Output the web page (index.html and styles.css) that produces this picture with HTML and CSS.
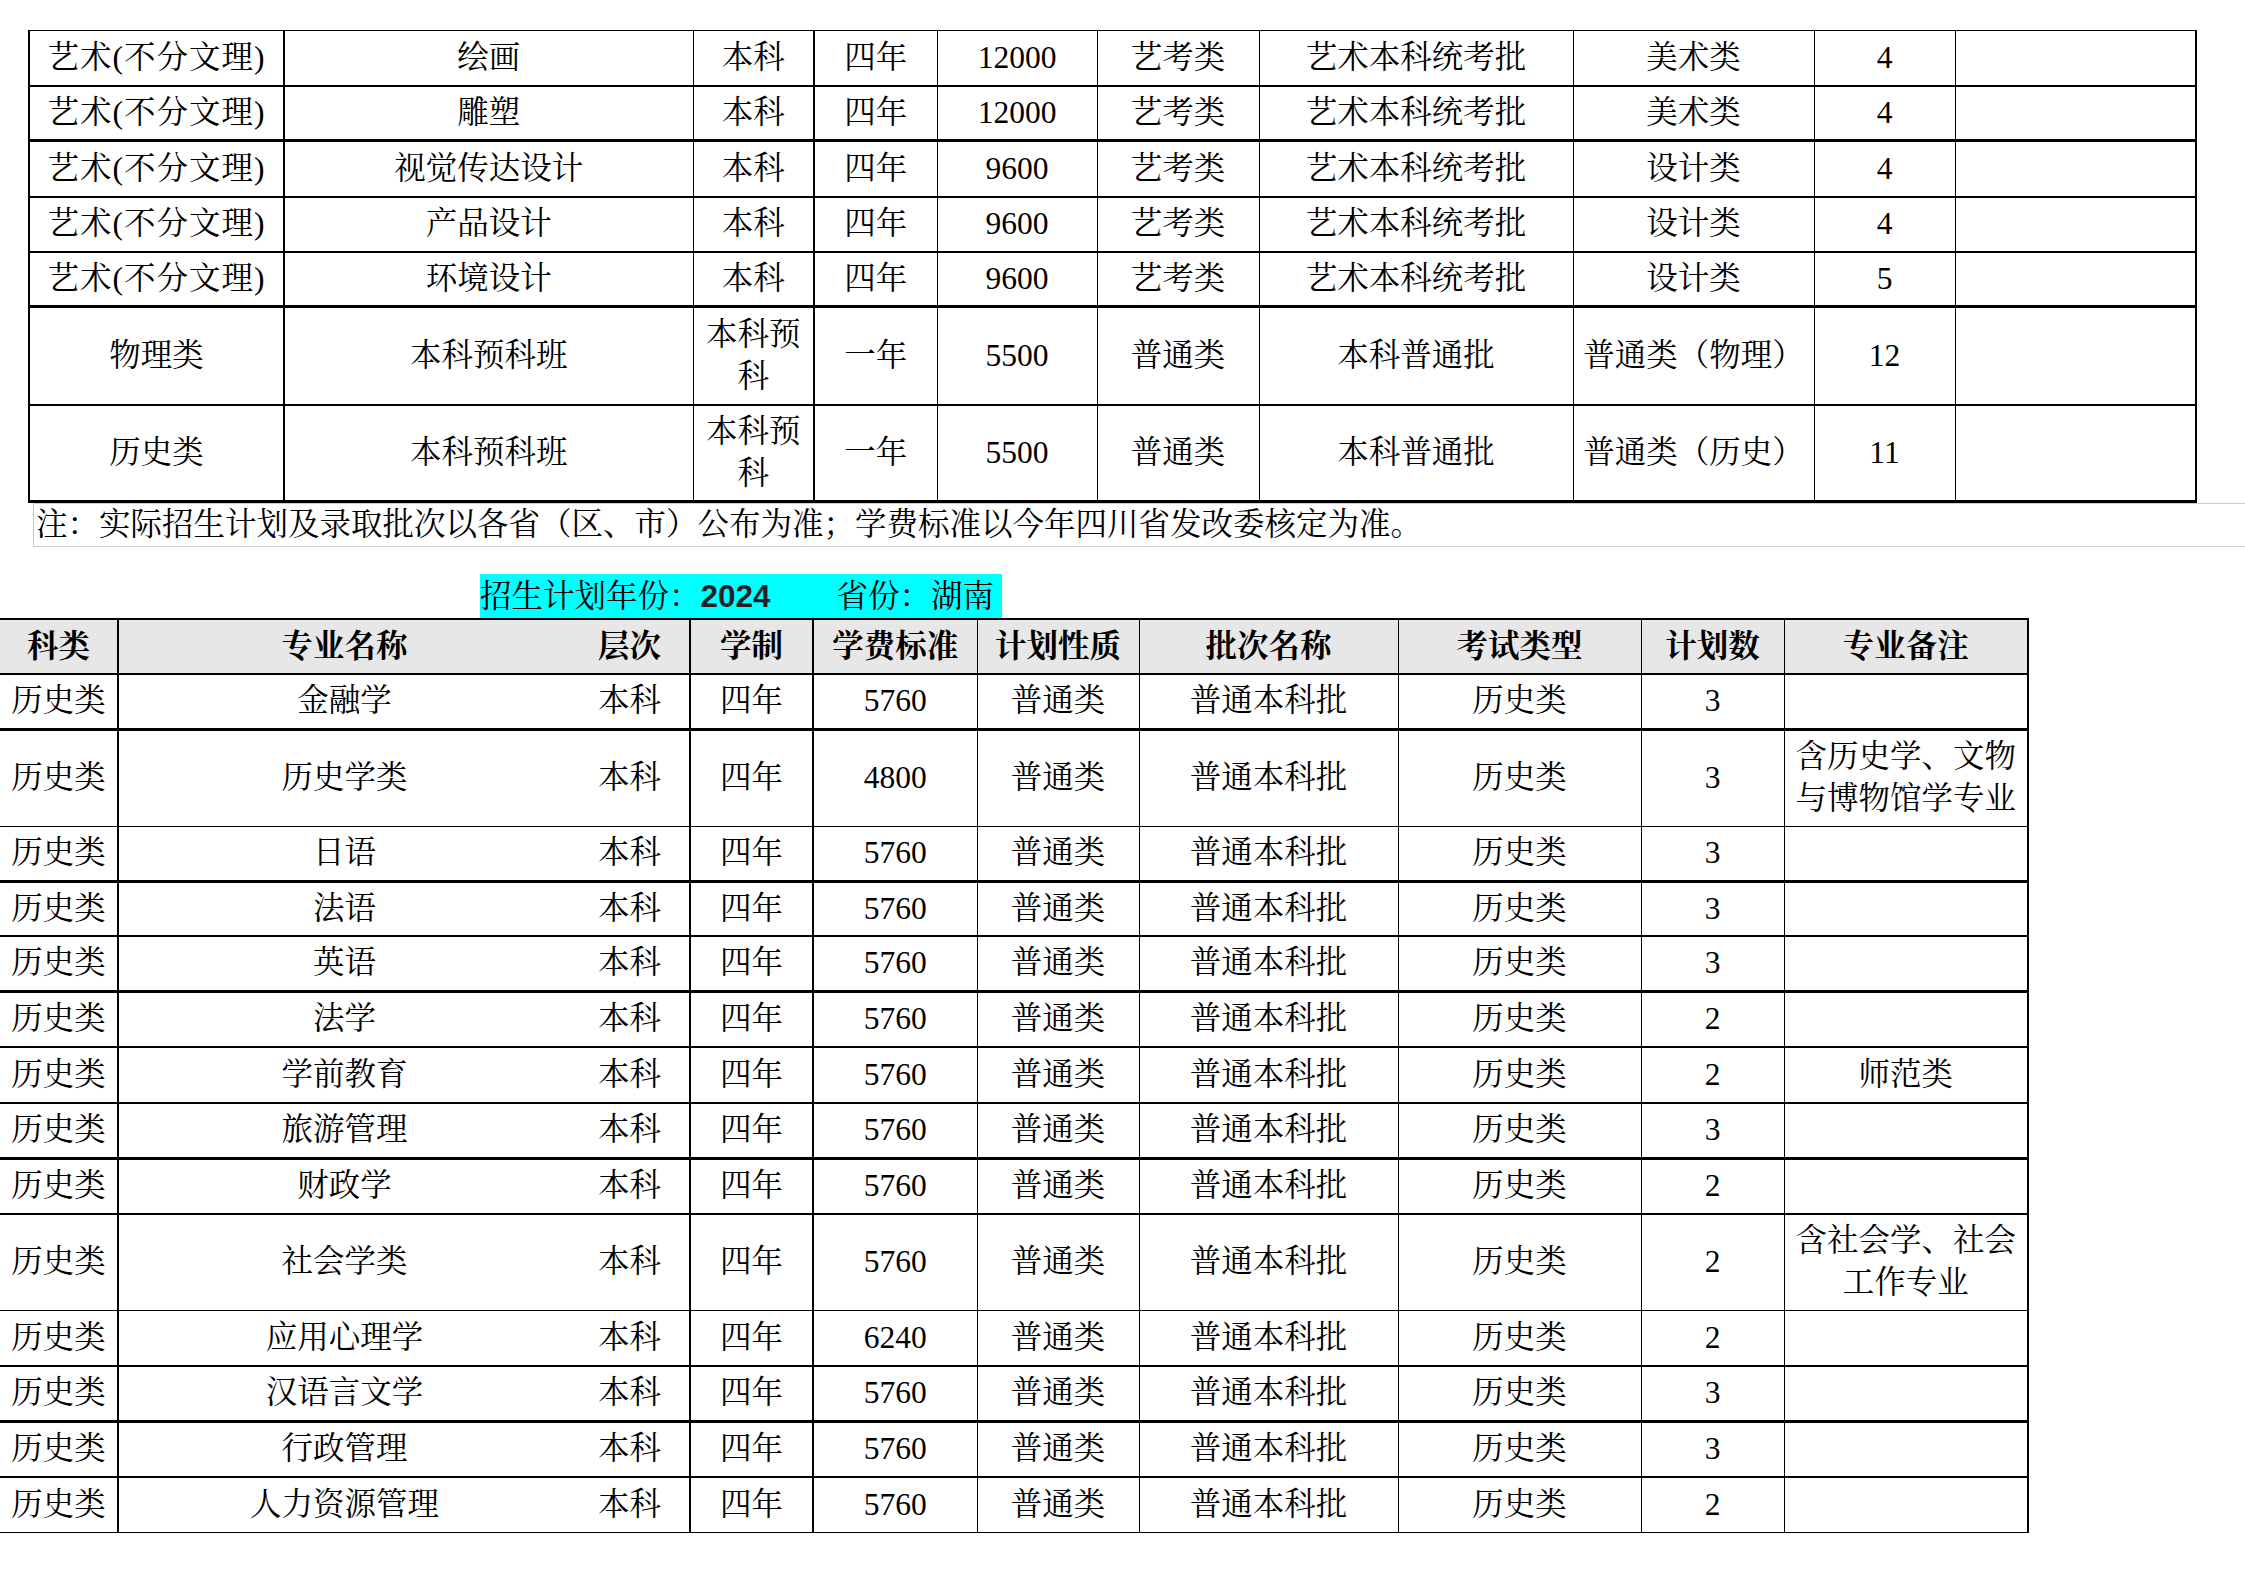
FILE: index.html
```html
<!DOCTYPE html>
<html lang="zh-CN">
<head>
<meta charset="utf-8">
<title>招生计划</title>
<link rel="stylesheet" href="styles.css">
</head>
<body>
<div class="sheet">
  <table class="grid grid-a">
    <colgroup>
      <col class="a1 vb"><col class="a2"><col class="a3 vb"><col class="a4"><col class="a5"><col class="a6"><col class="a7"><col class="a8"><col class="a9"><col class="a10 vb">
    </colgroup>
    <tr class="r55 tt1 bb2"><td class="lb art">艺术(不分文理)</td><td>绘画</td><td>本科</td><td>四年</td><td>12000</td><td>艺考类</td><td>艺术本科统考批</td><td>美术类</td><td>4</td><td></td></tr>
    <tr class="r55 bb3"><td class="lb art">艺术(不分文理)</td><td>雕塑</td><td>本科</td><td>四年</td><td>12000</td><td>艺考类</td><td>艺术本科统考批</td><td>美术类</td><td>4</td><td></td></tr>
    <tr class="r56 bb2"><td class="lb art">艺术(不分文理)</td><td>视觉传达设计</td><td>本科</td><td>四年</td><td>9600</td><td>艺考类</td><td>艺术本科统考批</td><td>设计类</td><td>4</td><td></td></tr>
    <tr class="r55 bb2"><td class="lb art">艺术(不分文理)</td><td>产品设计</td><td>本科</td><td>四年</td><td>9600</td><td>艺考类</td><td>艺术本科统考批</td><td>设计类</td><td>4</td><td></td></tr>
    <tr class="r55 bb3"><td class="lb art">艺术(不分文理)</td><td>环境设计</td><td>本科</td><td>四年</td><td>9600</td><td>艺考类</td><td>艺术本科统考批</td><td>设计类</td><td>5</td><td></td></tr>
    <tr class="r98 bb2"><td class="lb">物理类</td><td>本科预科班</td><td>本科预科</td><td>一年</td><td>5500</td><td>普通类</td><td>本科普通批</td><td>普通类（物理）</td><td>12</td><td></td></tr>
    <tr class="r97 bb3"><td class="lb">历史类</td><td>本科预科班</td><td>本科预科</td><td>一年</td><td>5500</td><td>普通类</td><td>本科普通批</td><td>普通类（历史）</td><td>11</td><td></td></tr>
  </table>

  <div class="note">注：实际招生计划及录取批次以各省（区、市）公布为准；学费标准以今年四川省发改委核定为准。</div>

  <div class="plan-head"><span class="plan-tag">招生计划年份：<b class="year">2024</b><span class="gap"></span>省份：湖南</span></div>

  <table class="grid grid-b">
    <colgroup>
      <col class="b1 vb"><col class="b2"><col class="b3 vb"><col class="b4 vb"><col class="b5"><col class="b6"><col class="b7"><col class="b8"><col class="b9"><col class="b10 vb">
    </colgroup>
    <tr class="head r55 tt2 bb2"><td class="nl">科类</td><td class="nr">专业名称</td><td class="nlft">层次</td><td>学制</td><td>学费标准</td><td>计划性质</td><td>批次名称</td><td>考试类型</td><td>计划数</td><td>专业备注</td></tr>
    <tr class="r55 bb3"><td class="nl">历史类</td><td class="nr">金融学</td><td class="nlft">本科</td><td>四年</td><td>5760</td><td>普通类</td><td>普通本科批</td><td>历史类</td><td>3</td><td></td></tr>
    <tr class="r97 bb1"><td class="nl">历史类</td><td class="nr">历史学类</td><td class="nlft">本科</td><td>四年</td><td>4800</td><td>普通类</td><td>普通本科批</td><td>历史类</td><td>3</td><td>含历史学、文物与博物馆学专业</td></tr>
    <tr class="r55 bb3"><td class="nl">历史类</td><td class="nr">日语</td><td class="nlft">本科</td><td>四年</td><td>5760</td><td>普通类</td><td>普通本科批</td><td>历史类</td><td>3</td><td></td></tr>
    <tr class="r55 bb2"><td class="nl">历史类</td><td class="nr">法语</td><td class="nlft">本科</td><td>四年</td><td>5760</td><td>普通类</td><td>普通本科批</td><td>历史类</td><td>3</td><td></td></tr>
    <tr class="r55 bb3"><td class="nl">历史类</td><td class="nr">英语</td><td class="nlft">本科</td><td>四年</td><td>5760</td><td>普通类</td><td>普通本科批</td><td>历史类</td><td>3</td><td></td></tr>
    <tr class="r56 bb2"><td class="nl">历史类</td><td class="nr">法学</td><td class="nlft">本科</td><td>四年</td><td>5760</td><td>普通类</td><td>普通本科批</td><td>历史类</td><td>2</td><td></td></tr>
    <tr class="r56 bb2"><td class="nl">历史类</td><td class="nr">学前教育</td><td class="nlft">本科</td><td>四年</td><td>5760</td><td>普通类</td><td>普通本科批</td><td>历史类</td><td>2</td><td>师范类</td></tr>
    <tr class="r55 bb3"><td class="nl">历史类</td><td class="nr">旅游管理</td><td class="nlft">本科</td><td>四年</td><td>5760</td><td>普通类</td><td>普通本科批</td><td>历史类</td><td>3</td><td></td></tr>
    <tr class="r56 bb2"><td class="nl">历史类</td><td class="nr">财政学</td><td class="nlft">本科</td><td>四年</td><td>5760</td><td>普通类</td><td>普通本科批</td><td>历史类</td><td>2</td><td></td></tr>
    <tr class="r96 bb1"><td class="nl">历史类</td><td class="nr">社会学类</td><td class="nlft">本科</td><td>四年</td><td>5760</td><td>普通类</td><td>普通本科批</td><td>历史类</td><td>2</td><td>含社会学、社会工作专业</td></tr>
    <tr class="r56 bb2"><td class="nl">历史类</td><td class="nr">应用心理学</td><td class="nlft">本科</td><td>四年</td><td>6240</td><td>普通类</td><td>普通本科批</td><td>历史类</td><td>2</td><td></td></tr>
    <tr class="r55 bb3"><td class="nl">历史类</td><td class="nr">汉语言文学</td><td class="nlft">本科</td><td>四年</td><td>5760</td><td>普通类</td><td>普通本科批</td><td>历史类</td><td>3</td><td></td></tr>
    <tr class="r56 bb2"><td class="nl">历史类</td><td class="nr">行政管理</td><td class="nlft">本科</td><td>四年</td><td>5760</td><td>普通类</td><td>普通本科批</td><td>历史类</td><td>3</td><td></td></tr>
    <tr class="r55 bb1"><td class="nl">历史类</td><td class="nr">人力资源管理</td><td class="nlft">本科</td><td>四年</td><td>5760</td><td>普通类</td><td>普通本科批</td><td>历史类</td><td>2</td><td></td></tr>
  </table>
</div>
</body>
</html>
```

FILE: styles.css
```css
html, body {
  margin: 0;
  padding: 0;
  background: #ffffff;
}

body {
  width: 2245px;
  color: #000;
  font-family: "Liberation Serif", "Noto Serif CJK SC", "Noto Sans CJK SC", serif;
}

.sheet {
  padding-top: 30px;
}

.grid {
  border-collapse: collapse;
  table-layout: fixed;
  font-size: 31.5px;
  line-height: 42px;
}

.grid td {
  border: 1px solid #000;
  padding: 0;
  text-align: center;
  vertical-align: middle;
}

.grid td.art {
  letter-spacing: 1px;
}

.grid-a {
  margin-left: 28px;
  width: 2167px;
}

.grid-b {
  margin-left: 0;
  width: 2028px;
}

/* column widths */
.a1 { width: 255px; }
.a2 { width: 409px; }
.a3 { width: 121px; }
.a4 { width: 123px; }
.a5 { width: 160px; }
.a6 { width: 162px; }
.a7 { width: 314px; }
.a8 { width: 241px; }
.a9 { width: 141px; }
.a10 { width: 241px; }

.b1 { width: 118px; }
.b2 { width: 452px; }
.b3 { width: 120px; }
.b4 { width: 123px; }
.b5 { width: 164px; }
.b6 { width: 162px; }
.b7 { width: 259px; }
.b8 { width: 243px; }
.b9 { width: 143px; }
.b10 { width: 244px; }

.vb { border-right: 2px solid #000; }
.grid td.lb { border-left: 2px solid #000; }
.grid td.nl { border-left-style: hidden; }
.grid td.nr { border-right-style: hidden; }
.grid td.nlft { border-left-style: hidden; }

/* row heights */
.r55 { height: 55px; }
.r56 { height: 56px; }
.r96 { height: 96px; }
.r97 { height: 97px; }
.r98 { height: 98px; }

/* row rules */
.tt1 td { border-top: 1px solid #000; }
.tt2 td { border-top: 2px solid #000; }
.bb1 td { border-bottom: 1px solid #000; }
.bb2 td { border-bottom: 2px solid #000; }
.bb3 td { border-bottom: 3px solid #000; }

.head td {
  background: #e7e7e7;
  font-weight: 700;
}

.note {
  margin-left: 33px;
  border: 1px solid #cccccc;
  border-right: none;
  height: 42px;
  line-height: 42px;
  padding-left: 2px;
  font-size: 31.5px;
  white-space: nowrap;
  overflow: hidden;
}

.plan-head {
  margin-top: 27px;
  padding-left: 480px;
  height: 44px;
  font-size: 31.5px;
}

.plan-tag {
  display: inline-block;
  background: #00ffff;
  height: 44px;
  line-height: 44px;
  padding-right: 8px;
  white-space: nowrap;
}

.year {
  font-family: "Liberation Sans", "Noto Sans", sans-serif;
  font-weight: 700;
  color: #222;
}

.gap {
  display: inline-block;
  width: 66px;
}
```
